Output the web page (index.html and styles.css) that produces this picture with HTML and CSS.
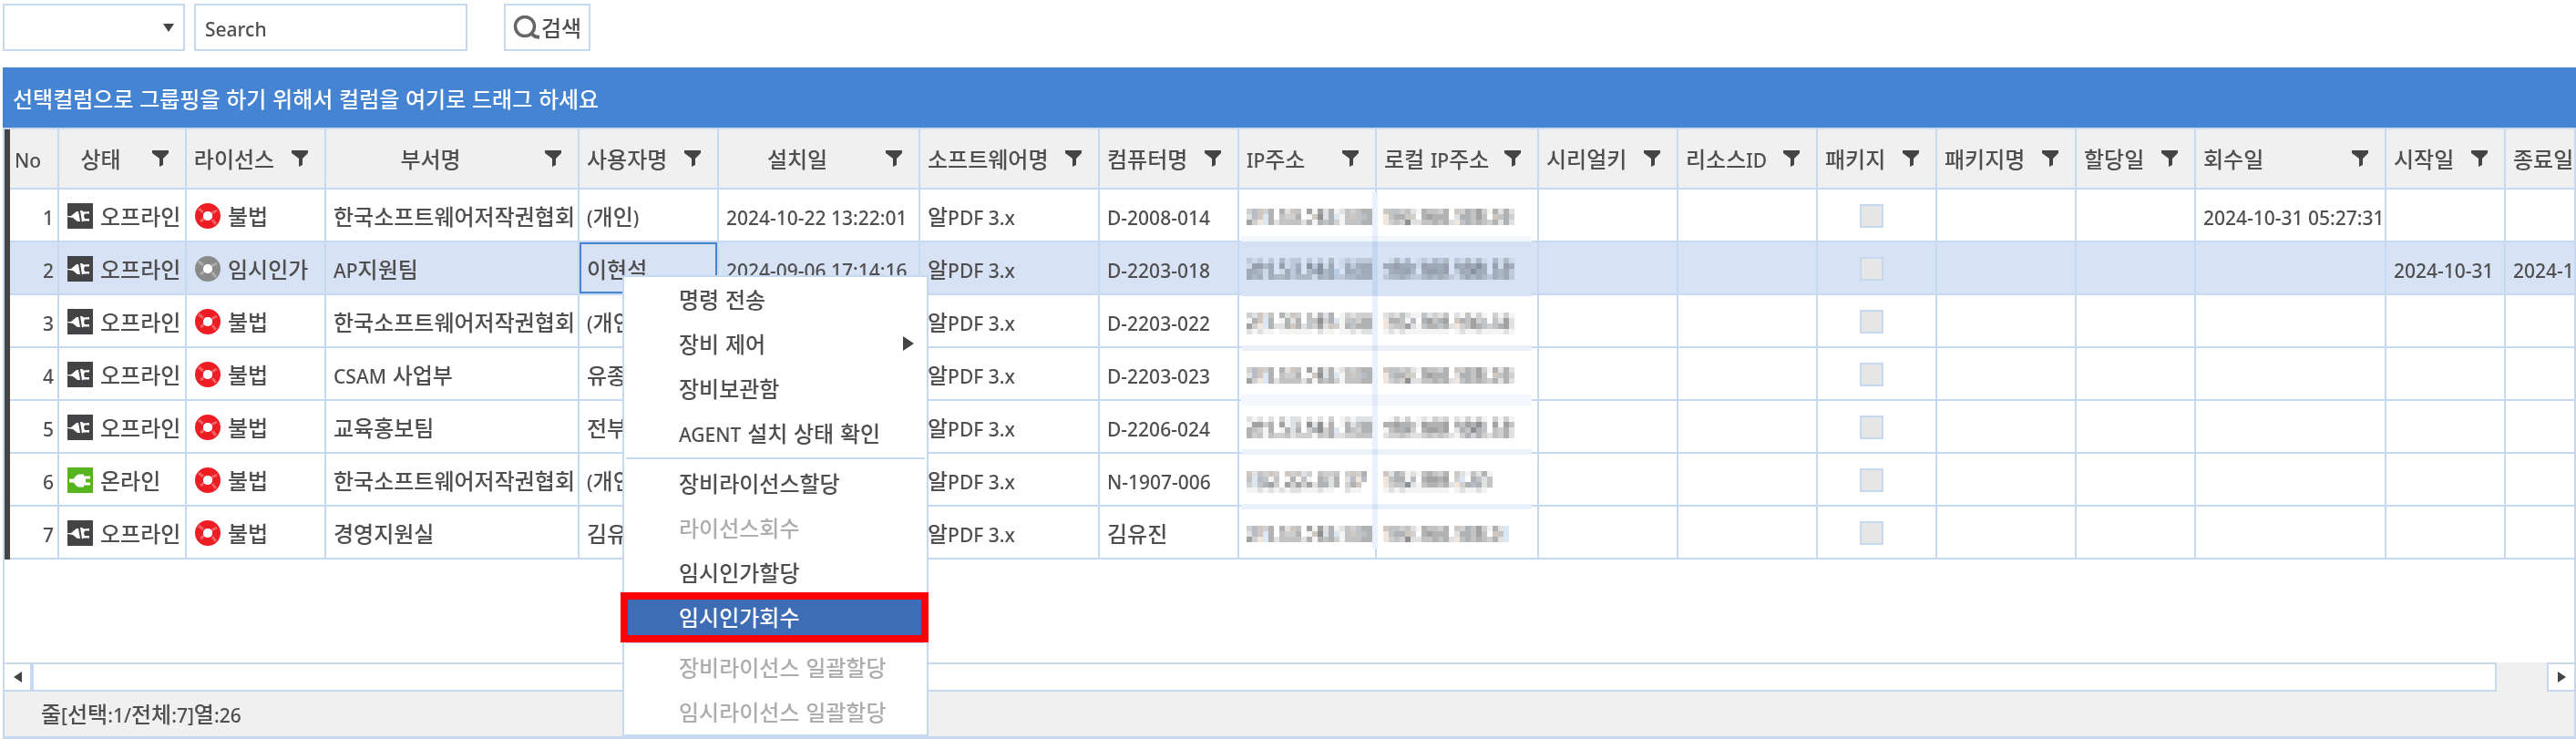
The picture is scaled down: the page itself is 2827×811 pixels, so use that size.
FILE: index.html
```html
<!DOCTYPE html>
<html lang="ko">
<head>
<meta charset="utf-8">
<title>라이선스 관리</title>
<link rel="stylesheet" href="styles.css">
</head>
<body>
<svg class="sprite" aria-hidden="true">
  <symbol id="funnel" viewBox="0 0 18 18"><path fill="#444" d="M0 0h18v3l-6 6v7l-4 2V9L0 3z"/></symbol>
  <symbol id="offline" viewBox="0 0 28 28"><path fill="#444446" d="M0 0h28v28H0z"/><path fill="#fff" d="M0 14h4l6-5h2l2 11h-3l-5-4-6-1z"/><path fill="#fff" d="M14 8h2l2 1.500 6-.5v2.500h-5l-1 2.500 1 3h5v2.500h-6l-2 1z"/></symbol>
  <symbol id="online" viewBox="0 0 28 28"><path fill="#57b421" d="M0 0h28v28H0z"/><path fill="#fff" d="M2 12.500h5l2-3 3-2h6v2h7v3h-5v4h5v3h-7v2h-6l-3-2-2-3H2z"/></symbol>
  <symbol id="disc" viewBox="0 0 28 28"><circle cx="14" cy="14" r="9.500" fill="none" stroke="currentColor" stroke-width="9"/><path d="M9 10L4 6M19 18l4 5M18 11l6-3M10 17l-4 3" stroke="#fff" stroke-opacity=".3" stroke-width="3"/><circle cx="14" cy="14" r="5" fill="#fff"/></symbol>
</svg>

<div class="app">
  <form class="toolbar">
    <div class="picker">
      <select class="picker-select" aria-label="검색 항목"><option></option></select>
      <svg class="picker-arrow" viewBox="0 0 12 9" aria-hidden="true"><path fill="#444" d="M0 0h12L6 9z"/></svg>
    </div>
    <input class="search-input" type="text" placeholder="Search" aria-label="검색어">
    <button class="search-button" type="button">
      <svg class="search-icon" viewBox="0 0 30 26" aria-hidden="true"><circle cx="13" cy="12" r="10.500" fill="none" stroke="#666" stroke-width="3.500"/><path d="M19 19l5 4 5 1" fill="none" stroke="#666" stroke-width="4"/></svg>검색
    </button>
  </form>

  <section class="grid">
    <div class="group-bar">선택컬럼으로 그룹핑을 하기 위해서 컬럼을 여기로 드래그 하세요</div>
    <div class="viewport">
      <table class="data">
        <colgroup>
          <col class="w-no"><col class="w-state"><col class="w-mid"><col class="w-dept"><col class="w-mid"><col class="w-install">
          <col class="w-soft"><col class="w-mid"><col class="w-ip"><col class="w-local"><col class="w-mid"><col class="w-mid">
          <col class="w-small"><col class="w-mid"><col class="w-small"><col class="w-return"><col class="w-small"><col class="w-mid">
        </colgroup>
        <thead><tr id="head"></tr></thead>
        <tbody id="rows"></tbody>
      </table>
      <svg class="mask" id="mask" viewBox="0 0 319 391" aria-label="가려진 IP 주소"></svg>
    </div>
    <div class="scrollbar">
      <button class="scroll-step" type="button" aria-label="왼쪽으로"><svg class="step-arrow" viewBox="0 0 9 12"><path fill="#444" d="M9 0v12L0 6z"/></svg></button>
      <div class="scroll-track"><div class="scroll-thumb"></div></div>
      <button class="scroll-step scroll-right" type="button" aria-label="오른쪽으로"><svg class="step-arrow" viewBox="0 0 9 12"><path fill="#444" d="M0 0v12l9-6z"/></svg></button>
    </div>
    <footer class="status">줄<span class="en">[</span>선택<span class="en">:1/</span>전체<span class="en">:7]</span>열<span class="en">:26</span></footer>
  </section>

  <div class="menu" role="menu">
    <button class="menu-item" role="menuitem" type="button">명령 전송</button>
    <button class="menu-item" role="menuitem" type="button">장비 제어<svg class="menu-arrow" viewBox="0 0 12 16" aria-hidden="true"><path fill="#444" d="M0 0v16l12-8z"/></svg></button>
    <button class="menu-item" role="menuitem" type="button">장비보관함</button>
    <button class="menu-item" role="menuitem" type="button"><span><span class="en">AGENT</span> 설치 상태 확인</span></button>
    <hr class="menu-line">
    <button class="menu-item" role="menuitem" type="button">장비라이선스할당</button>
    <button class="menu-item" role="menuitem" type="button" disabled>라이선스회수</button>
    <button class="menu-item" role="menuitem" type="button">임시인가할당</button>
    <button class="menu-item active" role="menuitem" type="button">임시인가회수</button>
    <hr class="menu-line">
    <button class="menu-item" role="menuitem" type="button" disabled>장비라이선스 일괄할당</button>
    <button class="menu-item" role="menuitem" type="button" disabled>임시라이선스 일괄할당</button>
  </div>
</div>
<script src="grid.js"></script>
</body>
</html>
```
FILE: styles.css
```css
* { box-sizing: border-box; }

body {
  margin: 0;
  background: #fff;
  color: #504e4e;
  font: 500 24px/32px "Noto Sans CJK KR", sans-serif;
}

button, input, select { font: inherit; color: inherit; margin: 0; }

.sprite { position: absolute; width: 0; height: 0; }

/* Latin letters and digits run smaller than the hangul beside them */
.en { font-family: "Noto Sans", "Open Sans", sans-serif; font-size: 21px; line-height: 24px; }

.app {
  position: relative;
  display: flex;
  flex-direction: column;
  min-height: 100vh;
  overflow: hidden;
}

.toolbar { display: flex; gap: 10px; padding: 4px 3px 18px; }

.picker { position: relative; width: 200px; height: 52px; }
.picker-select {
  appearance: none;
  width: 100%;
  height: 100%;
  border: 2px solid #c6d9f1;
  border-radius: 0;
  background: #fff;
}
.picker-arrow { position: absolute; right: 12px; top: 22px; width: 12px; height: 9px; pointer-events: none; }

.search-input {
  width: 300px;
  height: 52px;
  padding: 4px 10px 0;
  border: 2px solid #c6d9f1;
  font-family: "Noto Sans", "Noto Sans CJK KR", sans-serif;
  font-size: 21px;
}
.search-input::placeholder { color: #504e4e; opacity: 1; }

.search-button {
  display: flex;
  align-items: center;
  gap: 1px;
  height: 52px;
  margin-left: 30px;
  padding: 0 8px;
  border: 2px solid #c6d9f1;
  background: #fff;
}
.search-icon { width: 30px; height: 26px; }

.grid {
  flex: 1;
  display: flex;
  flex-direction: column;
  margin-left: 3px;
  border: solid #c6d9f1;
  border-width: 0 2px 3px;
}

.group-bar {
  margin: 0 -2px;
  padding: 18px 11px 16px;
  background: #4584d3;
  color: #fff;
}

.viewport {
  position: relative;
  flex: 1;
  overflow: hidden;
  border-top: 2px solid #c6d9f1;
}

.data {
  table-layout: fixed;
  width: 0;
  border-left: 6px solid #444;
  border-spacing: 0;
}
.w-no { width: 54px; }
.w-state { width: 140px; }
.w-mid { width: 153px; }
.w-dept { width: 278px; }
.w-install { width: 221px; }
.w-soft { width: 197px; }
.w-ip { width: 151px; }
.w-local { width: 178px; }
.w-small { width: 131px; }
.w-return { width: 209px; }

.data th, .data td {
  padding: 1px 0 0 8px;
  border: solid #c6d9f1;
  border-width: 0 2px 2px 0;
  white-space: nowrap;
  overflow: hidden;
  text-align: left;
  font-weight: 500;
}
.data th { height: 66px; padding: 0; background: #f0f0f0; }
.data td { height: 58px; }

.head { display: flex; align-items: center; gap: 11px; padding-right: 18px; }
.head-label { flex: 1; padding-left: 8px; }
.head.centered .head-label { padding-left: 0; text-align: center; }
.head.number .head-label { padding-left: 5px; }
.filter { display: flex; padding: 0; border: 0; background: none; }
.filter-icon { width: 18px; height: 18px; }

.data td.number { padding-right: 4px; text-align: right; }
.data td.tick { padding: 2px 12px 0 0; text-align: center; }
.selected td { background: #d7e3f4; }
.data td.focused { box-shadow: inset 0 0 0 2px #4584d3; }

.with-icon { display: flex; align-items: center; gap: 8px; padding-left: 1px; }
.state-icon { flex: none; width: 28px; height: 28px; }
.illegal { color: #ee1c23; }
.temporary { color: #8a8a8a; }

.tickbox {
  appearance: none;
  display: block;
  width: 26px;
  height: 26px;
  margin: 0 auto;
  border: 2px solid #c6d9f1;
  background: #e6e6e6;
}

/* pixelated cover over the two address columns */
.mask { position: absolute; left: 1357px; top: 69px; width: 319px; height: 391px; }
.mask .blend { mix-blend-mode: multiply; }

.scrollbar { display: flex; height: 32px; background: #f0f0f0; }
.scroll-step {
  display: flex;
  align-items: center;
  justify-content: center;
  width: 30px;
  padding: 0;
  border: solid #c6d9f1;
  border-width: 2px 2px 2px 0;
  background: #fff;
}
.scroll-right { border-width: 2px 0 2px 2px; }
.step-arrow { width: 9px; height: 12px; }
.scroll-track { flex: 1; }
.scroll-thumb { width: 98%; height: 32px; border: 2px solid #c6d9f1; background: #fff; }

.status { padding: 8px 40px 9px; background: #f0f0f0; }

.menu {
  position: absolute;
  left: 683px;
  top: 302px;
  width: 336px;
  border: 2px solid #c6d9f1;
  background: #fff;
}
.menu-item {
  position: relative;
  display: flex;
  align-items: center;
  width: 100%;
  height: 49px;
  padding: 0 14px 2px 60px;
  border: 0;
  background: none;
  text-align: left;
  white-space: nowrap;
}
.menu-item:disabled { color: #adadad; }
.menu-arrow { width: 12px; height: 16px; margin-left: auto; }
.menu-line { height: 2px; margin: 2px; border: 0; background: #c6d9f1; }
.menu-item.active { background: #3f6db5; color: #fff; }
.menu-item.active::after {
  content: "";
  position: absolute;
  inset: -3px -2px -3px -4px;
  border: 8px solid #f00;
}
```
FILE: grid.js
```javascript
const columns = [
  ["No", "number"], ["상태", "centered"], ["라이선스", "centered"], ["부서명", "centered"], ["사용자명", ""],
  ["설치일", "centered"], ["소프트웨어명", ""], ["컴퓨터명", ""], ["IP주소", ""], ["로컬 IP주소", ""],
  ["시리얼키", ""], ["리소스ID", ""], ["패키지", ""], ["패키지명", ""], ["할당일", ""],
  ["회수일", ""], ["시작일", ""], ["종료일", ""]
];

const data = [
  ["오프라인", "불법", "한국소프트웨어저작권협회", "(개인)", "2024-10-22 13:22:01", "D-2008-014", "2024-10-31 05:27:31", "", ""],
  ["오프라인", "임시인가", "AP지원팀", "이현석", "2024-09-06 17:14:16", "D-2203-018", "", "2024-10-31", "2024-1"],
  ["오프라인", "불법", "한국소프트웨어저작권협회", "(개인)", "", "D-2203-022", "", "", ""],
  ["오프라인", "불법", "CSAM 사업부", "유종", "", "D-2203-023", "", "", ""],
  ["오프라인", "불법", "교육홍보팀", "전부", "", "D-2206-024", "", "", ""],
  ["온라인", "불법", "한국소프트웨어저작권협회", "(개인)", "", "N-1907-006", "", "", ""],
  ["오프라인", "불법", "경영지원실", "김유", "", "김유진", "", "", ""]
];

const text = s => s.replace(/[\x21-\x7e]+(?: [\x21-\x7e]+)*/g, '<span class="en">$&</span>');
const icon = (id, cls) => `<svg class="${cls}" aria-hidden="true"><use href="#${id}"/></svg>`;

document.getElementById("head").innerHTML = columns.map(([name, cls]) =>
  `<th scope="col"><div class="head ${cls}"><span class="head-label">${text(name)}</span>` +
  (cls === "number" ? "" : `<button class="filter" type="button" aria-label="${name} 필터">${icon("funnel", "filter-icon")}</button>`) +
  "</div></th>").join("");

document.getElementById("rows").innerHTML = data.map((d, i) => {
  const [state, license, dept, user, installed, computer, returned, start, end] = d;
  const stateIcon = icon(state === "온라인" ? "online" : "offline", "state-icon");
  const discIcon = icon("disc", "state-icon " + (license === "불법" ? "illegal" : "temporary"));
  const cell = s => `<td>${text(s)}</td>`;
  return `<tr class="${i === 1 ? "selected" : ""}">` +
    `<td class="number">${text(String(i + 1))}</td>` +
    `<td><div class="with-icon">${stateIcon}${state}</div></td>` +
    `<td><div class="with-icon">${discIcon}${license}</div></td>` +
    cell(dept) +
    `<td class="${i === 1 ? "focused" : ""}">${text(user)}</td>` +
    cell(installed) + cell("알PDF 3.x") + cell(computer) + "<td></td><td></td><td></td><td></td>" +
    `<td class="tick"><input class="tickbox" type="checkbox" disabled aria-label="패키지 ${i + 1}"></td>` +
    "<td></td><td></td>" + cell(returned) + cell(start) + cell(end) + "</tr>";
}).join("");

/* Address cover: 6px blocks, one character per block */
const shades = {
  1: "#f4f4f3", 2: "#e0e1e2", 3: "#cfd0cf", 4: "#c1c3c4", 5: "#b0b2b4", 6: "#a2a2a2", 7: "#8e9093",
  p: "#d0c7c0", q: "#f0e6dc", b: "#dbe8f3", c: "#b9bcc6"
};
const onBlue = { ...shades, 5: "#bdbfc2", 6: "#b4b4b6", 7: "#a2a4a8" };
const plainIp = ["3cp35.52p4.616251243455", "2cpb5.4335.1p725b14p4c5", "63qb5244442515453144455"];
const plainLocal = ["p44342154435.p3546315252", "q455p3.56555.255464.p453", "q343722445452q4545435252"];
const tallIp = ["212.2.3122.2.2.3.121222", "16635.6124.72715.152455", "54315.1525.35735b.54355", "53414334233314352233444"];
const tallLocal = [".1313.121323.213131.3131", "556554165556.546574.6164", "145563.56656.254754.4352", "233432234343213535324352"];
const blocks = [
  [3, plainIp, plainLocal],
  [12, tallIp, tallLocal],
  [22, ["32p24.52p3.41525.132333", "15pb5.1525.44735b144355", "63qb5225p524362p3154555", "21211.111111.211.112122"],
    ["232421142324.214131.3131", "q5541c.56456.p54634.4262", "q344621455452q3465434562", "121211111111.12112111121"]],
  [32, plainIp, plainLocal],
  [41, tallIp, tallLocal],
  [51, ["p243p3.p3p23.4334.3p35", "4bc414.15141.5425.2cqc", "3b4563.6363625525.35p.", "1121212122111211..211."],
    ["p25412145435.p214251", "q4551c.56656.3b.5424", "q344721455452q35c524", "121211111111.121121."]],
  [61, plainIp, plainLocal.map(s => s.slice(0, 22) + "b")]
];
const rect = (x, y, w, h, fill, cls = "") => `<rect class="${cls}" x="${x}" y="${y}" width="${w}" height="${h}" fill="${fill}"/>`;
let art = rect(0, 0, 319, 391, "#fff") + rect(0, 54, 319, 60, "#d7e3f4") + rect(0, 54, 319, 6, "#d3e1f2");
[[48, 6, "#f4f8fd"], [168, 6, "#eaf1fa"], [222, 12, "#f4f8fd"], [282, 6, "#eaf1fa"], [342, 6, "#eaf1fa"]]
  .forEach(([y, h, fill]) => { art += rect(0, y, 319, h, fill); });
art += rect(144, 0, 6, 391, "#eaf1fa", "blend");
blocks.forEach(([row, ip, local]) => {
  const palette = row === 12 ? onBlue : shades;
  [[1, ip], [26, local]].forEach(([col, lines]) => lines.forEach((line, j) => [...line].forEach((c, i) => {
    if (palette[c]) art += rect((col + i) * 6, (row + j) * 6, 6, 6, palette[c], row === 12 ? "blend" : "");
  })));
});
document.getElementById("mask").innerHTML = art;
```
